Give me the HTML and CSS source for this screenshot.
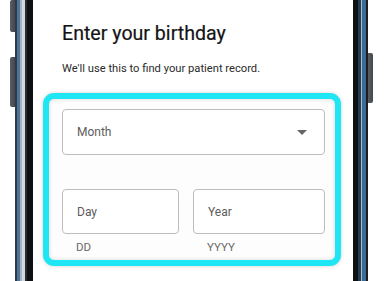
FILE: index.html
```html
<!DOCTYPE html>
<html lang="en">
<head>
<meta charset="utf-8">
<title>Enter your birthday</title>
<link rel="stylesheet" href="styles.css">
</head>
<body>
<div class="device">
  <div class="side side-left">
    <div class="hw-btn hw-btn-top"></div>
    <div class="hw-btn hw-btn-vol"></div>
  </div>
  <div class="bezel bezel-left"></div>
  <main class="screen">
    <h1 class="title">Enter your birthday</h1>
    <p class="subtitle">We'll use this to find your patient record.</p>
    <section class="highlight">
      <div class="field field-select">
        <span class="field-label">Month</span>
        <span class="caret"></span>
      </div>
      <div class="row">
        <div class="col">
          <div class="field"><span class="field-label">Day</span></div>
          <div class="helper">DD</div>
        </div>
        <div class="col">
          <div class="field"><span class="field-label">Year</span></div>
          <div class="helper">YYYY</div>
        </div>
      </div>
    </section>
  </main>
  <div class="bezel bezel-right"></div>
  <div class="side side-right">
    <div class="hw-btn hw-btn-power"></div>
  </div>
</div>
</body>
</html>
```

FILE: styles.css
```css
html, body {
  margin: 0;
  padding: 0;
  background: #ffffff;
}
body {
  width: 384px;
  height: 281px;
  overflow: hidden;
  font-family: Roboto, "Noto Sans", "Liberation Sans", sans-serif;
}
.device {
  display: flex;
  height: 281px;
}
.side {
  display: flex;
  flex-direction: column;
}
.side-left {
  width: 15px;
  align-items: flex-end;
}
.side-right {
  width: 16px;
  align-items: flex-start;
}
.hw-btn {
  width: 5px;
  background: linear-gradient(to right, #5a5d62, #44474c);
}
.side-left .hw-btn { border-radius: 2px 0 0 2px; }
.side-right .hw-btn { border-radius: 0 2px 2px 0; }
.hw-btn-top { height: 32px; }
.hw-btn-vol { height: 50px; margin-top: 25px; }
.hw-btn-power { height: 50px; margin-top: 53px; }
.bezel {
  height: 281px;
}
.bezel-left {
  width: 18px;
  background: linear-gradient(to right,
    #2f3a46 0, #2f3a46 2px,
    #4d7399 2px, #4d7399 5px,
    #9fb4c8 5px, #9fb4c8 7px,
    #d4d8dc 7px, #d4d8dc 10px,
    #2a2c30 10px, #2a2c30 12px,
    #0e0f11 12px, #0e0f11 18px);
}
.bezel-right {
  width: 15px;
  background: linear-gradient(to right,
    #0e0f11 0, #0e0f11 5px,
    #253c55 5px, #253c55 8px,
    #a8b8c8 8px, #a8b8c8 9px,
    #3f6a93 9px, #3f6a93 13px,
    #1b1e22 13px, #1b1e22 15px);
}
.screen {
  width: 320px;
  height: 281px;
  background: #ffffff;
  padding-top: 21px;
  box-sizing: border-box;
}
.title {
  margin: 0 0 0 29px;
  font-size: 19.6px;
  line-height: 26px;
  font-weight: 400;
  color: #141416;
  -webkit-text-stroke: 0.2px #141416;
}
.subtitle {
  margin: 15px 0 0 29px;
  font-size: 11.2px;
  line-height: 14px;
  color: #2b2b2b;
}
.highlight {
  margin: 17px 0 0 10px;
  width: 298px;
  box-sizing: border-box;
  border: 6px solid #1ee6f4;
  border-radius: 11px;
  padding: 10px 10px 6px 13px;
  box-shadow: 0 0 4px rgba(0, 0, 0, 0.18), inset 0 0 4px rgba(0, 0, 0, 0.14);
  background: #fdfdfd;
}
.field {
  box-sizing: border-box;
  height: 45px;
  border: 1px solid #bdbdbd;
  border-radius: 4px;
  background: #ffffff;
  display: flex;
  align-items: center;
  padding: 0 14px;
}
.field-select {
  height: 46px;
  justify-content: space-between;
}
.field-label {
  font-size: 12px;
  color: #5c5c5c;
}
.caret {
  width: 0;
  height: 0;
  border-left: 5px solid transparent;
  border-right: 5px solid transparent;
  border-top: 5px solid #666666;
  margin-right: 3px;
}
.row {
  display: grid;
  grid-template-columns: 117px 1fr;
  column-gap: 14px;
  margin-top: 34px;
}
.helper {
  margin-top: 6px;
  padding-left: 14px;
  font-size: 11.5px;
  line-height: 14px;
  color: #6a6a6a;
}
```
